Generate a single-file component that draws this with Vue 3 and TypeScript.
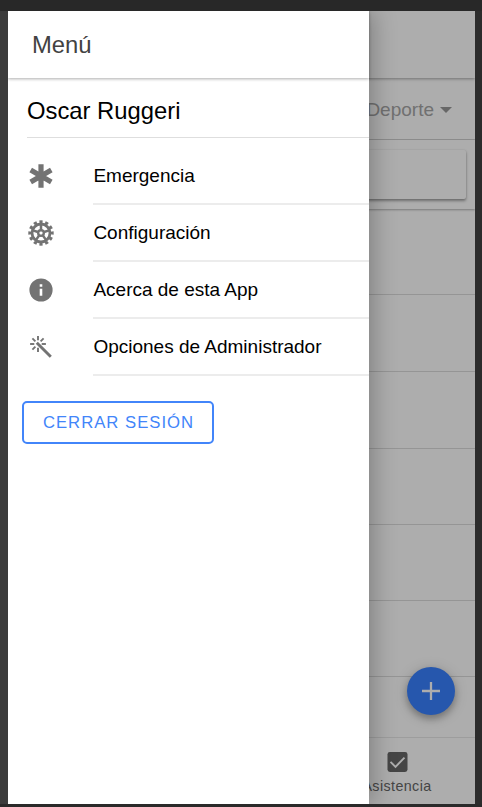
<script setup lang="ts">
type IconName = 'medical' | 'cog' | 'info' | 'wand'

interface MenuEntry {
  icon: IconName
  label: string
}

const entries: MenuEntry[] = [
  { icon: 'medical', label: 'Emergencia' },
  { icon: 'cog', label: 'Configuración' },
  { icon: 'info', label: 'Acerca de esta App' },
  { icon: 'wand', label: 'Opciones de Administrador' },
]

const rowHeights: number[] = [86, 77, 77, 76, 76, 76]
const spokes: number[] = [0, 72, 144, 216, 288]
const rays: number[] = [0, 90, 135, 180, 225, 270, 315]
</script>

<template>
  <div class="desktop">
    <div class="device">
      <main class="page">
        <header class="page-header"></header>
        <div class="filter-bar">
          <span>Deporte</span>
          <i class="caret"></i>
        </div>
        <div class="search-bar"><div class="search-card"></div></div>
        <div class="rows">
          <div v-for="(h, i) in rowHeights" :key="i" class="row" :style="{ height: h + 'px' }"></div>
        </div>
        <footer class="tabs">
          <div class="tab">
            <svg class="tab-icon" viewBox="0 0 20 20">
              <rect width="20" height="20" rx="2.4" fill="#666" />
              <path d="M3 9.8 8 14.8 17 5.6" fill="none" stroke="#fff" stroke-width="1.9" />
            </svg>
            <span>Asistencia</span>
          </div>
        </footer>
        <button class="fab" aria-label="+">
          <svg viewBox="0 0 20 20">
            <path d="M10 1v18M1 10h18" stroke="#fff" stroke-width="2.3" />
          </svg>
        </button>
      </main>

      <div class="backdrop"></div>

      <aside class="menu">
        <header class="menu-header">Menú</header>
        <h1 class="user">Oscar Ruggeri</h1>
        <nav>
          <a v-for="entry in entries" :key="entry.icon" class="item">
            <svg class="item-icon" viewBox="-14 -14 28 28">
              <g v-if="entry.icon === 'medical'" stroke="#737373" stroke-width="5.2">
                <path d="M0-11.7V11.7M-10.3-5.9 10.3 5.9M-10.3 5.9 10.3-5.9" />
              </g>
              <g v-else-if="entry.icon === 'cog'" fill="none" stroke="#737373">
                <circle r="11.2" stroke-width="3" pathLength="240" stroke-dasharray="11 9" stroke-dashoffset="5.5" />
                <circle r="9" stroke-width="2.8" />
                <circle r="2.8" stroke-width="2.4" />
                <path v-for="a in spokes" :key="a" d="M0-3.2V-8.5" stroke-width="2.5" :transform="`rotate(${a})`" />
              </g>
              <g v-else-if="entry.icon === 'info'">
                <circle r="11.6" fill="#737373" />
                <path d="M-1.3-5.8h2.6v2.5h-2.6zM-1.3-1.2h2.6v7h-2.6z" fill="#fff" />
              </g>
              <g v-else fill="none" stroke="#737373">
                <path d="M-4.2-4.2 9.8 9.8" stroke-width="2.9" />
                <path
                  v-for="a in rays"
                  :key="a"
                  d="M3.7 0H7.9"
                  stroke-width="1.9"
                  :transform="`translate(-3 -3) rotate(${a})`"
                />
              </g>
            </svg>
            <span class="item-label">{{ entry.label }}</span>
          </a>
        </nav>
        <button class="logout">CERRAR SESIÓN</button>
      </aside>
    </div>
  </div>
</template>

<style>
body {
  margin: 0;
  overflow: hidden;
}
</style>

<style scoped>
.desktop {
  box-sizing: border-box;
  width: 482px;
  height: 807px;
  padding: 11px 7px 3px 8px;
  background:
    linear-gradient(#282828, #282828) top / 100% 11px no-repeat,
    linear-gradient(#2a2a2a, #2a2a2a) bottom / 100% 3px no-repeat,
    linear-gradient(90deg, #3c3c3c 8px, #2c2c2c 8px);
  font-family: "Liberation Sans", Arial, sans-serif;
}
.device {
  position: relative;
  height: 793px;
  overflow: hidden;
  background: #fff;
}
.page {
  display: flex;
  flex-direction: column;
  height: 100%;
}
.page-header {
  flex: none;
  height: 67px;
  box-shadow: 0 1px 3px rgba(0, 0, 0, 0.35);
}
.filter-bar {
  box-sizing: border-box;
  flex: none;
  height: 62px;
  padding: 2px 23px 0 0;
  display: flex;
  align-items: center;
  justify-content: flex-end;
  gap: 6px;
  border-bottom: 1px solid #d2d2d2;
  color: #a6a6a6;
  font-size: 19px;
}
.caret {
  border: 6px solid transparent;
  border-top-color: #999;
  border-bottom: 0;
}
.search-bar {
  box-sizing: border-box;
  flex: none;
  height: 69px;
  padding: 10px 9px;
  box-shadow: 0 1px 2px rgba(0, 0, 0, 0.3);
}
.search-card {
  height: 49px;
  border-radius: 2px;
  box-shadow: 0 2px 3px rgba(0, 0, 0, 0.36), 0 0 2px rgba(0, 0, 0, 0.12);
}
.rows {
  flex: 1;
  min-height: 0;
}
.row {
  box-sizing: border-box;
  border-bottom: 1px solid #dcdcdc;
}
.tabs {
  box-sizing: border-box;
  flex: none;
  height: 67px;
  border-top: 1px solid #e8e8e8;
  display: flex;
  justify-content: flex-end;
}
.tab {
  width: 156px;
  display: flex;
  flex-direction: column;
  align-items: center;
  padding-top: 14px;
  gap: 6px;
  color: #666;
  font-size: 14.3px;
  line-height: 16px;
  letter-spacing: 0.4px;
}
.tab-icon {
  width: 21px;
  height: 20px;
}
.fab {
  position: absolute;
  right: 20px;
  bottom: 89px;
  width: 48px;
  height: 48px;
  padding: 0;
  border: 0;
  border-radius: 50%;
  background: #3880ff;
  display: grid;
  place-items: center;
  box-shadow: 0 4px 7px rgba(0, 0, 0, 0.24), 0 2px 14px rgba(0, 0, 0, 0.18);
}
.fab svg {
  width: 20px;
  height: 20px;
}
.backdrop {
  position: absolute;
  inset: 0;
  background: rgba(0, 0, 0, 0.32);
}
.menu {
  position: absolute;
  inset: 0 auto 0 0;
  width: 361px;
  background: #fff;
  box-shadow: 5px 0 21px rgba(0, 0, 0, 0.25);
}
.menu-header {
  box-sizing: border-box;
  height: 67px;
  padding-left: 24px;
  line-height: 67px;
  color: #424242;
  font-size: 23.8px;
  box-shadow: 0 1px 3px rgba(0, 0, 0, 0.32);
}
.user {
  box-sizing: border-box;
  height: 60px;
  margin: 0 0 10px 19px;
  padding-top: 3px;
  border-bottom: 1px solid #dedede;
  line-height: 60px;
  color: #000;
  font-size: 23.8px;
  font-weight: 400;
}
.item {
  display: flex;
  height: 57px;
  padding-left: 19px;
}
.item-icon {
  flex: none;
  width: 28px;
  height: 28px;
  margin: 14px 38.4px 0 0;
}
.item-label {
  box-sizing: border-box;
  flex: 1;
  border-bottom: 2px solid #ececec;
  line-height: 55px;
  color: #000;
  font-size: 19px;
}
.logout {
  display: block;
  box-sizing: border-box;
  width: 192px;
  height: 43px;
  margin: 25px 0 0 14px;
  padding: 0 0 0 1px;
  border: 2px solid #4285fa;
  border-radius: 5px;
  background: transparent;
  color: #4285fa;
  font: 16.7px "Liberation Sans", Arial, sans-serif;
  letter-spacing: 1px;
}
</style>
